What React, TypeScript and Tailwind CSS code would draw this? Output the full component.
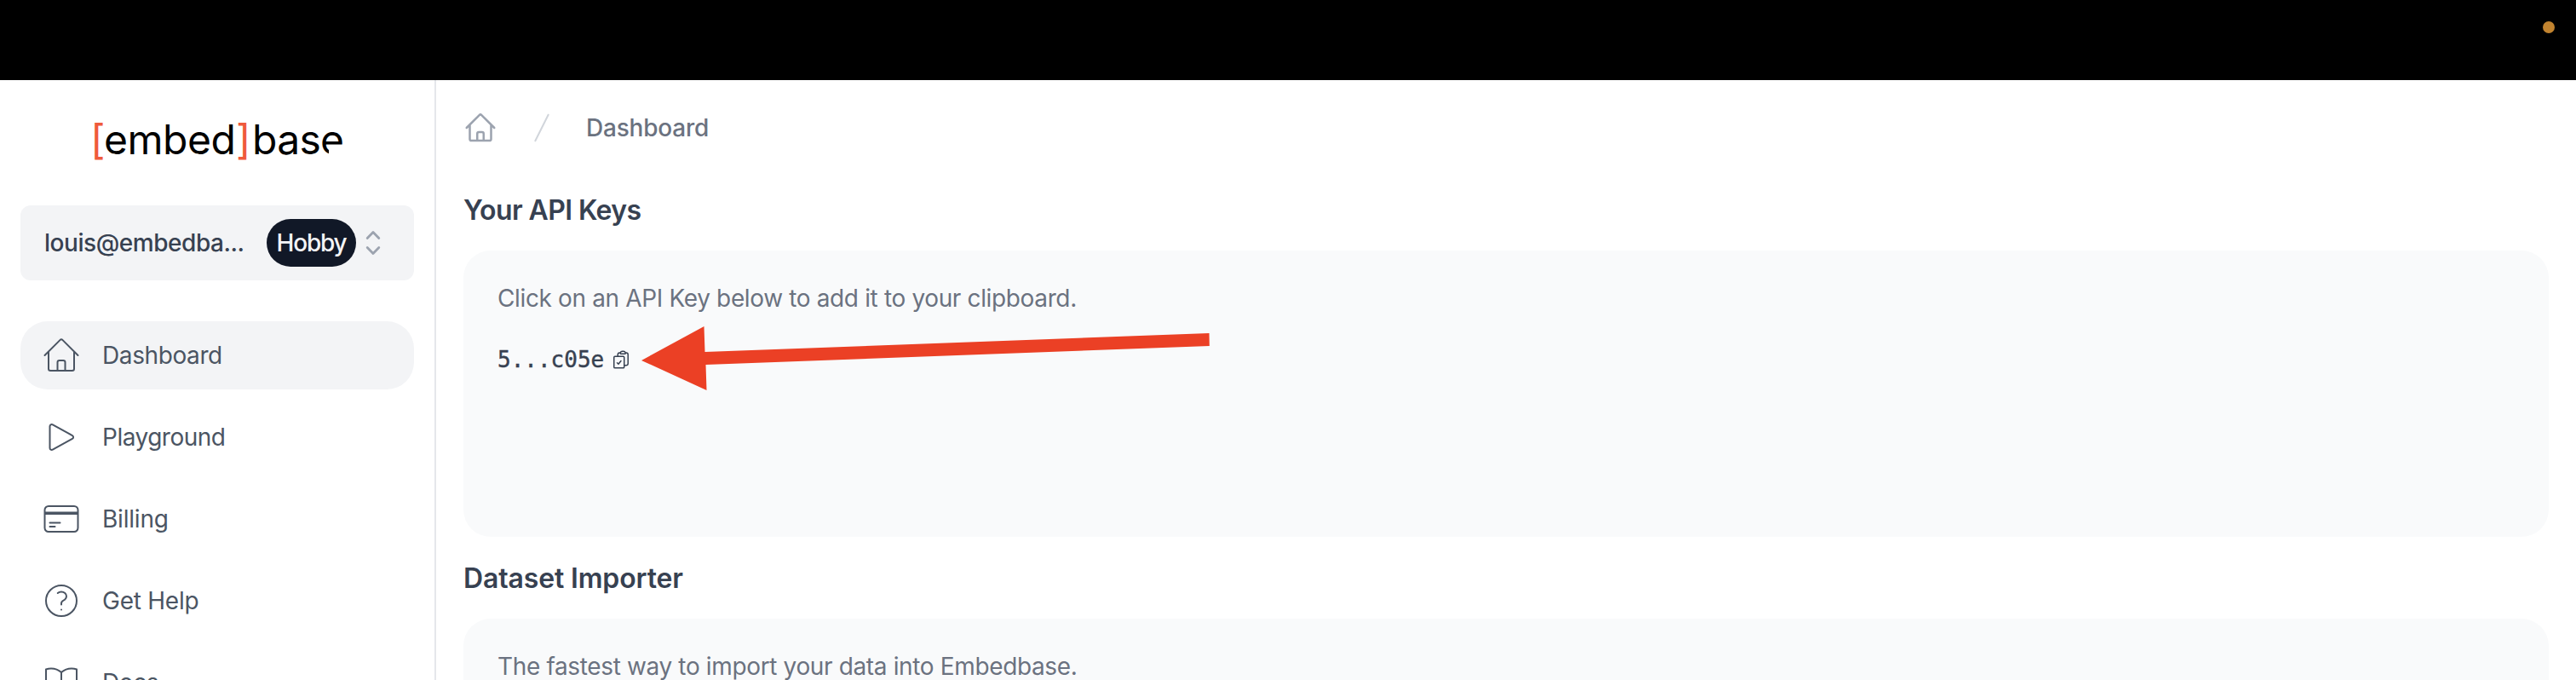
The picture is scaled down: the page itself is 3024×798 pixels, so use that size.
import type { ReactNode } from "react";

const HOME =
  "M2.25 12l8.954-8.955c.44-.439 1.152-.439 1.591 0L21.75 12M4.5 9.75v10.125c0 .621.504 1.125 1.125 1.125H9.75v-4.875c0-.621.504-1.125 1.125-1.125h2.25c.621 0 1.125.504 1.125 1.125V21h4.125c.621 0 1.125-.504 1.125-1.125V9.75M8.25 21h8.25";
const PLAY =
  "M5.25 5.653c0-.856.917-1.398 1.667-.986l11.54 6.348a1.125 1.125 0 010 1.971l-11.54 6.347a1.125 1.125 0 01-1.667-.985V5.653z";
const CARD =
  "M2.25 8.25h19.5M2.25 9h19.5m-16.5 5.25h6m-6 2.25h3m-3.75 3h15a2.25 2.25 0 002.25-2.25V6.75A2.25 2.25 0 0019.5 4.5h-15a2.25 2.25 0 00-2.25 2.25v10.5A2.25 2.25 0 004.5 19.5z";
const HELP =
  "M9.879 7.519c1.171-1.025 3.071-1.025 4.242 0 1.172 1.025 1.172 2.687 0 3.712-.203.179-.43.326-.67.442-.745.361-1.45.999-1.45 1.827v.75M21 12a9 9 0 11-18 0 9 9 0 0118 0zm-9 5.25h.008v.008H12v-.008z";
const BOOK =
  "M12 6.042A8.967 8.967 0 006 3.75c-1.052 0-2.062.18-3 .512v14.25A8.987 8.987 0 016 18c2.305 0 4.408.867 6 2.292m0-14.25a8.966 8.966 0 016-2.292c1.052 0 2.062.18 3 .512v14.25A8.987 8.987 0 0018 18a8.967 8.967 0 00-6 2.292m0-14.25v14.25";
const CLIPBOARD =
  "M11.35 3.836c-.065.21-.1.433-.1.664 0 .414.336.75.75.75h4.5a.75.75 0 00.75-.75 2.25 2.25 0 00-.1-.664m-5.8 0A2.251 2.251 0 0113.5 2.25H15c1.012 0 1.867.668 2.15 1.586m-5.8 0c-.376.023-.75.05-1.124.08C9.095 4.01 8.25 4.973 8.25 6.108V8.25m8.9-4.414c.376.023.75.05 1.124.08 1.131.094 1.976 1.057 1.976 2.192V16.5A2.25 2.25 0 0118 18.75h-2.25m-7.5-10.5H4.875c-.621 0-1.125.504-1.125 1.125v11.25c0 .621.504 1.125 1.125 1.125h9.75c.621 0 1.125-.504 1.125-1.125V18.75m-7.5-10.5h6.375c.621 0 1.125.504 1.125 1.125v9.375m-8.25-3l1.5 1.5 3-3.75";

function Icon({ d, className, stroke }: { d: string; className: string; stroke: number }) {
  return (
    <svg
      viewBox="0 0 24 24"
      fill="none"
      stroke="currentColor"
      strokeWidth={stroke}
      strokeLinecap="round"
      strokeLinejoin="round"
      className={className}
    >
      <path d={d} />
    </svg>
  );
}

const NAV = [
  { label: "Dashboard", icon: HOME, active: true, tracking: "tracking-[-0.4px]" },
  { label: "Playground", icon: PLAY, active: false, tracking: "tracking-[-0.5px]" },
  { label: "Billing", icon: CARD, active: false, tracking: "tracking-[-0.2px]" },
  { label: "Get Help", icon: HELP, active: false, tracking: "tracking-[-0.25px]" },
  { label: "Docs", icon: BOOK, active: false, tracking: "tracking-[-0.4px]" },
];

function Logo() {
  return (
    <div className="relative ml-[106px] flex h-[60px] w-[302px] items-center whitespace-nowrap text-[48px] leading-[60px] text-black">
      <span className="w-[16px] text-[#ef5a3c]">[</span>
      <span className="w-[155px] tracking-[-0.5px]">embed</span>
      <span className="w-[19px] text-[#ef5a3c]">]</span>
      <span className="tracking-[-0.7px]">base</span>
      <span className="absolute left-[280px] top-[36px] h-4 w-6 bg-white" />
    </div>
  );
}

function Sidebar() {
  return (
    <aside className="w-[512px] shrink-0 border-r-2 border-[#e5e7eb] px-6 pt-10">
      <div className="-ml-6">
        <Logo />
      </div>
      <button className="mt-[47px] flex h-[88px] w-[462px] items-center rounded-xl bg-[#f3f4f6] pl-7 text-[28px] font-medium text-[#374151]">
        <span className="w-[261px] whitespace-nowrap text-left tracking-[-0.45px]">louis@embedba...</span>
        <span className="flex h-14 w-[105px] items-center justify-center rounded-[28px] bg-[#111827] tracking-[-1.2px] text-[#f3f4f6]">
          Hobby
        </span>
        <svg
          viewBox="0 0 20 32"
          fill="none"
          stroke="#9ca3af"
          strokeWidth="2.8"
          strokeLinecap="round"
          strokeLinejoin="round"
          className="ml-[10px] h-8 w-5"
        >
          <path d="M3.2 10.6 10 3.6l6.8 7M3.2 21.4l6.8 7 6.8-7" />
        </svg>
      </button>
      <nav className="mt-12 flex flex-col gap-4">
        {NAV.map((n) => (
          <a
            key={n.label}
            className={
              "flex h-20 w-[462px] items-center gap-6 rounded-[32px] px-6 text-[28px] text-[#4b5563] " +
              (n.active ? "bg-[#f3f4f6]" : "")
            }
          >
            <Icon d={n.icon} stroke={1} className="size-12 shrink-0" />
            <span className={n.tracking}>{n.label}</span>
          </a>
        ))}
      </nav>
    </aside>
  );
}

function Section({ title, titleClass, children }: { title: string; titleClass: string; children: ReactNode }) {
  return (
    <section>
      <h2 className={"flex h-24 items-center pt-[2px] text-[32px] font-semibold leading-10 text-[#374151] " + titleClass}>
        {title}
      </h2>
      <div className="relative h-[336px] rounded-[32px] bg-[#f9fafb] px-10 pt-9 text-[28px] leading-10">{children}</div>
    </section>
  );
}

export default function App() {
  return (
    <div className="flex h-[798px] w-[3024px] flex-col overflow-hidden bg-white font-['Inter',sans-serif]">
      <header className="flex h-[94px] shrink-0 justify-end bg-black pr-[25px] pt-[25px]">
        <span className="size-[14px] rounded-full bg-[#c1832f]" />
      </header>
      <div className="flex min-h-0 flex-1">
        <Sidebar />
        <main className="flex-1 pl-8 pr-8 pt-9">
          <div className="flex h-10 items-center gap-8">
            <Icon d={HOME} stroke={1.5} className="size-10 text-[#9ca3af]" />
            <svg viewBox="0 0 20 20" fill="#d1d5db" className="size-10">
              <path d="M5.555 17.776l8-16 .894.448-8 16-.894-.448z" />
            </svg>
            <span className="text-[28px] font-medium leading-10 tracking-[-0.2px] text-[#6b7280]">Dashboard</span>
          </div>
          <div className="mt-7">
            <Section title="Your API Keys" titleClass="tracking-[-0.6px]">
              <p className="tracking-[-0.36px] text-[#6b7280]">Click on an API Key below to add it to your clipboard.</p>
              <div className="mt-8 flex items-center gap-2 text-[#374151]">
                <span className="font-['DejaVu_Sans_Mono',monospace] text-[26px] [-webkit-text-stroke:0.4px]">
                  5...c05e
                </span>
                <Icon d={CLIPBOARD} stroke={1.5} className="size-6" />
              </div>
              <svg viewBox="0 0 680 90" className="absolute left-[206px] top-[86px] h-[90px] w-[680px]" fill="#eb4025">
                <path d="M3 43 76.5 3l1 30L669.5 11l.3 15L78.5 48l1 30z" />
              </svg>
            </Section>
            <Section title="Dataset Importer" titleClass="tracking-[-0.15px]">
              <p className="tracking-[-0.36px] text-[#6b7280]">The fastest way to import your data into Embedbase.</p>
            </Section>
          </div>
        </main>
      </div>
    </div>
  );
}
